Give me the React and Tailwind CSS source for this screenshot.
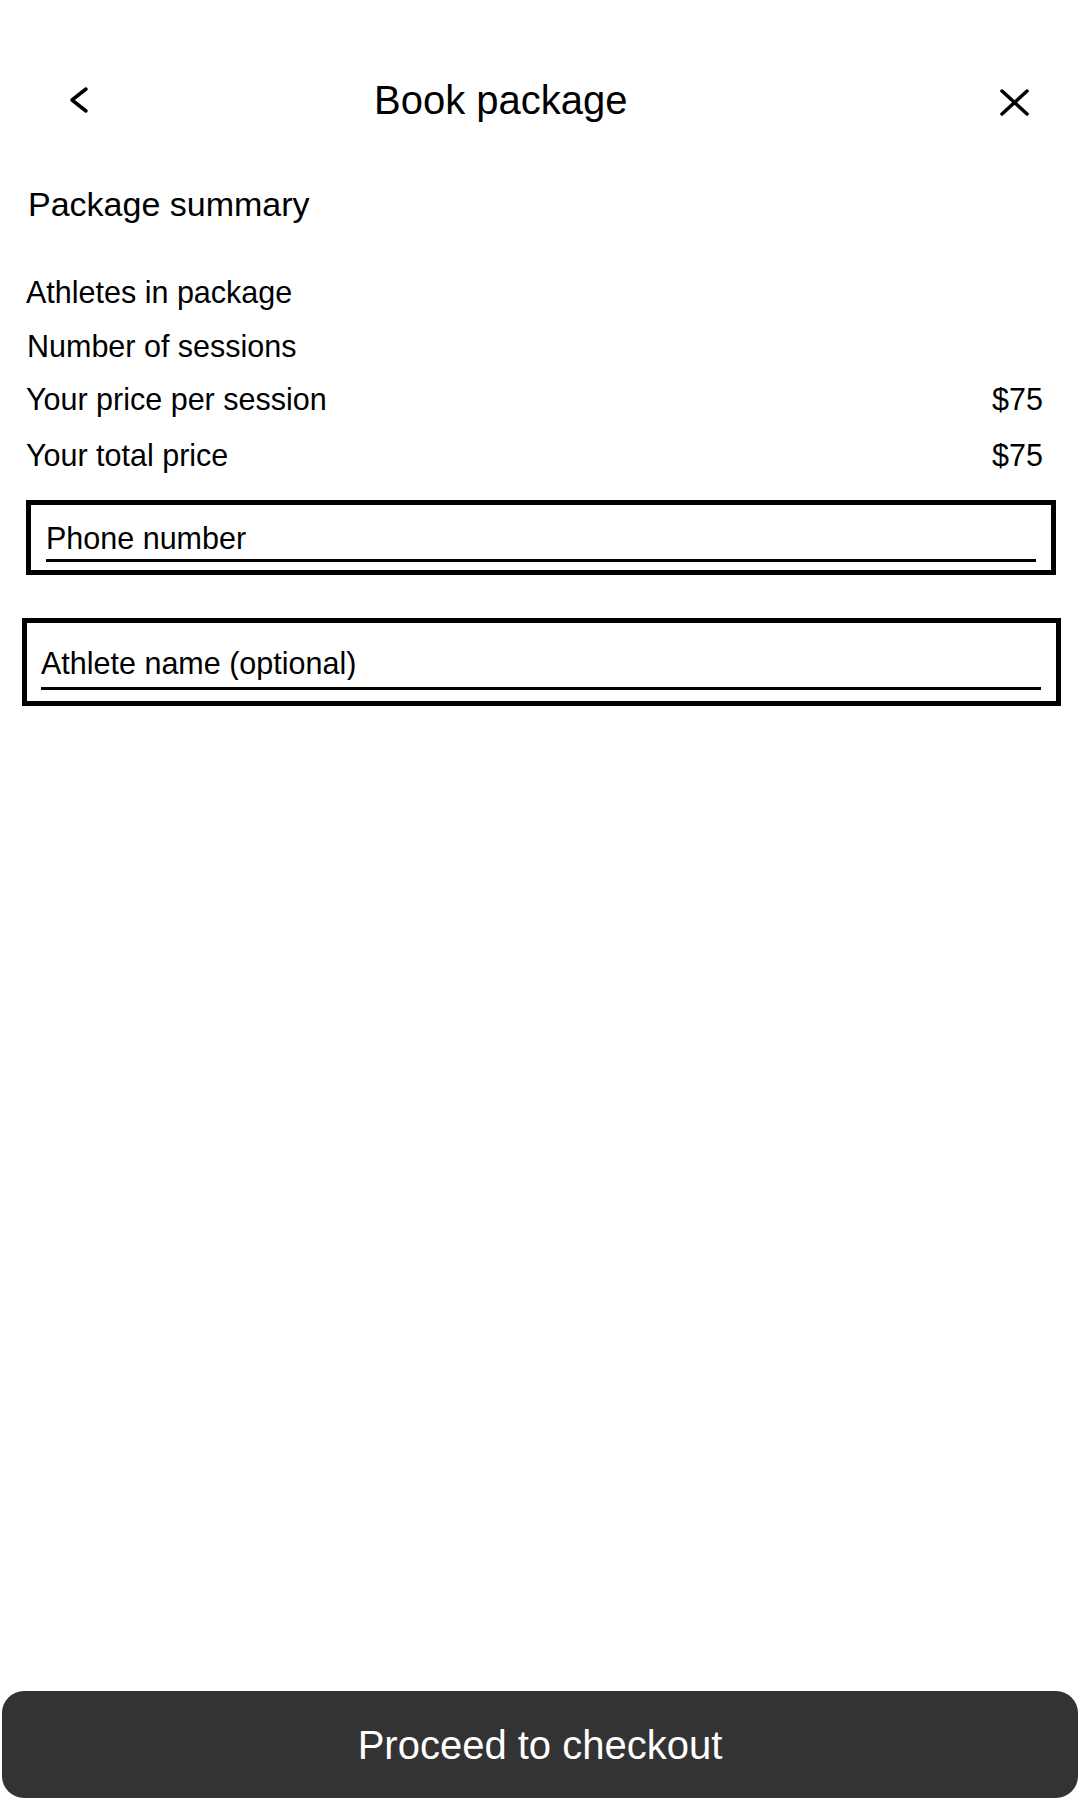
import React from 'react';

const SummaryRow = ({ label, value, className = '' }) => (
    <div className={`flex items-center justify-between pl-[26px] pr-[37px] text-[30.5px] leading-[34px] ${className}`}>
        <span>{label}</span>
        {value && <span>{value}</span>}
    </div>
);

const App = () => {
    return (
        <div className="h-[1800px] w-full bg-white text-black flex flex-col [font-family:'Liberation_Sans',Arial,sans-serif]">
            {/* Header */}
            <div className="flex items-center h-[44px] mt-[78px]">
                <button type="button" className="ml-[69px]">
                    <svg width="20" height="28" viewBox="0 0 20 28" fill="none" stroke="black" strokeWidth="3.5" strokeLinecap="round" strokeLinejoin="round">
                        <path d="M17 3 L3 14 L17 25" />
                    </svg>
                </button>
                <h1 className="ml-[285px] text-[40px] leading-[44px] font-normal">Book package</h1>
                <button type="button" className="ml-auto mr-[51px] mt-[5px]">
                    <svg width="29" height="27" viewBox="0 0 29 27" fill="none" stroke="black" strokeWidth="3.5" strokeLinecap="round">
                        <path d="M2 2 L27 25 M27 2 L2 25" />
                    </svg>
                </button>
            </div>

            <h2 className="mt-[63px] pl-[28px] text-[34px] leading-[38px] font-normal">Package summary</h2>

            <SummaryRow label="Athletes in package" className="mt-[52px]" />
            <SummaryRow label="Number of sessions" className="mt-[20px] pl-[27px]" />
            <SummaryRow label="Your price per session" value="$75" className="mt-[19px]" />
            <SummaryRow label="Your total price" value="$75" className="mt-[22px]" />

            {/* Phone number */}
            <div className="mt-[28px] ml-[26px] mr-[24px] border-[5px] border-black px-[15px] pt-[16px] pb-[8px]">
                <div className="border-b-[3px] border-black pb-[3px]">
                    <input
                        type="tel"
                        placeholder="Phone number"
                        className="w-full h-[34px] text-[30.5px] leading-[34px] placeholder:text-black outline-none bg-transparent"
                    />
                </div>
            </div>

            {/* Athlete name */}
            <div className="mt-[43px] ml-[22px] mr-[19px] border-[5px] border-black pl-[14px] pr-[15px] pt-[23px] pb-[11px]">
                <div className="border-b-[3px] border-black pb-[6px]">
                    <input
                        type="text"
                        placeholder="Athlete name (optional)"
                        className="w-full h-[34px] text-[30.5px] leading-[34px] placeholder:text-black outline-none bg-transparent"
                    />
                </div>
            </div>

            <button
                type="button"
                className="mt-auto mx-[2px] mb-[2px] h-[107px] rounded-[22px] bg-[#333333] text-white text-[40px] leading-[44px] flex items-center justify-center"
            >
                Proceed to checkout
            </button>
        </div>
    );
};

export default App;
